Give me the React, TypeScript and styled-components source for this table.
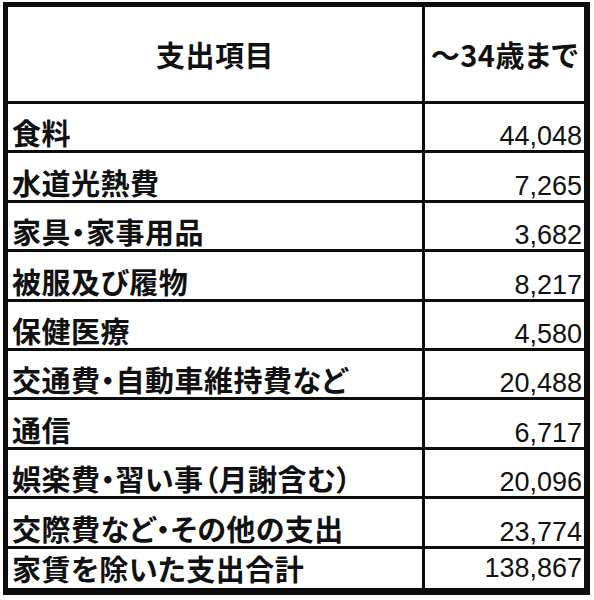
import React from 'react';
import styled, { createGlobalStyle } from 'styled-components';

const GlobalStyle = createGlobalStyle`
  html, body {
    margin: 0;
    padding: 0;
    background: #ffffff;
  }
`;

const Sheet = styled.div`
  display: grid;
  grid-template-columns: 414px 159px;
  grid-template-rows: 94px repeat(9, 46.4px) 39px;
  gap: 3px;
  width: max-content;
  margin: 2px 0 0 3px;
  padding: 5px 6px 7px 5px;
  background: #0d0d0d;
`;

const HeadCell = styled.div`
  display: flex;
  align-items: center;
  justify-content: center;
  background: #ffffff;
  color: #111111;
  font-family: 'Noto Sans CJK JP', sans-serif;
  font-weight: 700;
  font-size: 29px;
  line-height: 1;
  letter-spacing: 0.5px;
  font-feature-settings: 'palt';
`;

const LabelCell = styled.div<{ $last?: boolean }>`
  display: flex;
  align-items: flex-end;
  padding: 0 0 ${({ $last }) => ($last ? 5 : 3)}px 4px;
  background: #ffffff;
  color: #111111;
  font-family: 'Noto Sans CJK JP', sans-serif;
  font-weight: 700;
  font-size: 29px;
  line-height: 1;
  letter-spacing: 0.5px;
  font-feature-settings: 'palt';
  white-space: nowrap;
`;

const ValueCell = styled.div<{ $last?: boolean }>`
  display: flex;
  align-items: flex-end;
  justify-content: flex-end;
  padding: 0 2px ${({ $last }) => ($last ? 6 : 0)}px 0;
  background: #ffffff;
  color: #111111;
  font-family: 'Liberation Sans', Arial, sans-serif;
  font-size: 27px;
  line-height: 1;
`;

const rows: [string, string][] = [
  ['食料', '44,048'],
  ['水道光熱費', '7,265'],
  ['家具・家事用品', '3,682'],
  ['被服及び履物', '8,217'],
  ['保健医療', '4,580'],
  ['交通費・自動車維持費など', '20,488'],
  ['通信', '6,717'],
  ['娯楽費・習い事（月謝含む）', '20,096'],
  ['交際費など・その他の支出', '23,774'],
  ['家賃を除いた支出合計', '138,867'],
];

export default function App() {
  return (
    <>
      <GlobalStyle />
      <Sheet>
        <HeadCell>支出項目</HeadCell>
        <HeadCell>～34歳まで</HeadCell>
        {rows.map(([label, value], i) => {
          const last = i === rows.length - 1;
          return (
            <React.Fragment key={label}>
              <LabelCell $last={last}>{label}</LabelCell>
              <ValueCell $last={last}>{value}</ValueCell>
            </React.Fragment>
          );
        })}
      </Sheet>
    </>
  );
}
